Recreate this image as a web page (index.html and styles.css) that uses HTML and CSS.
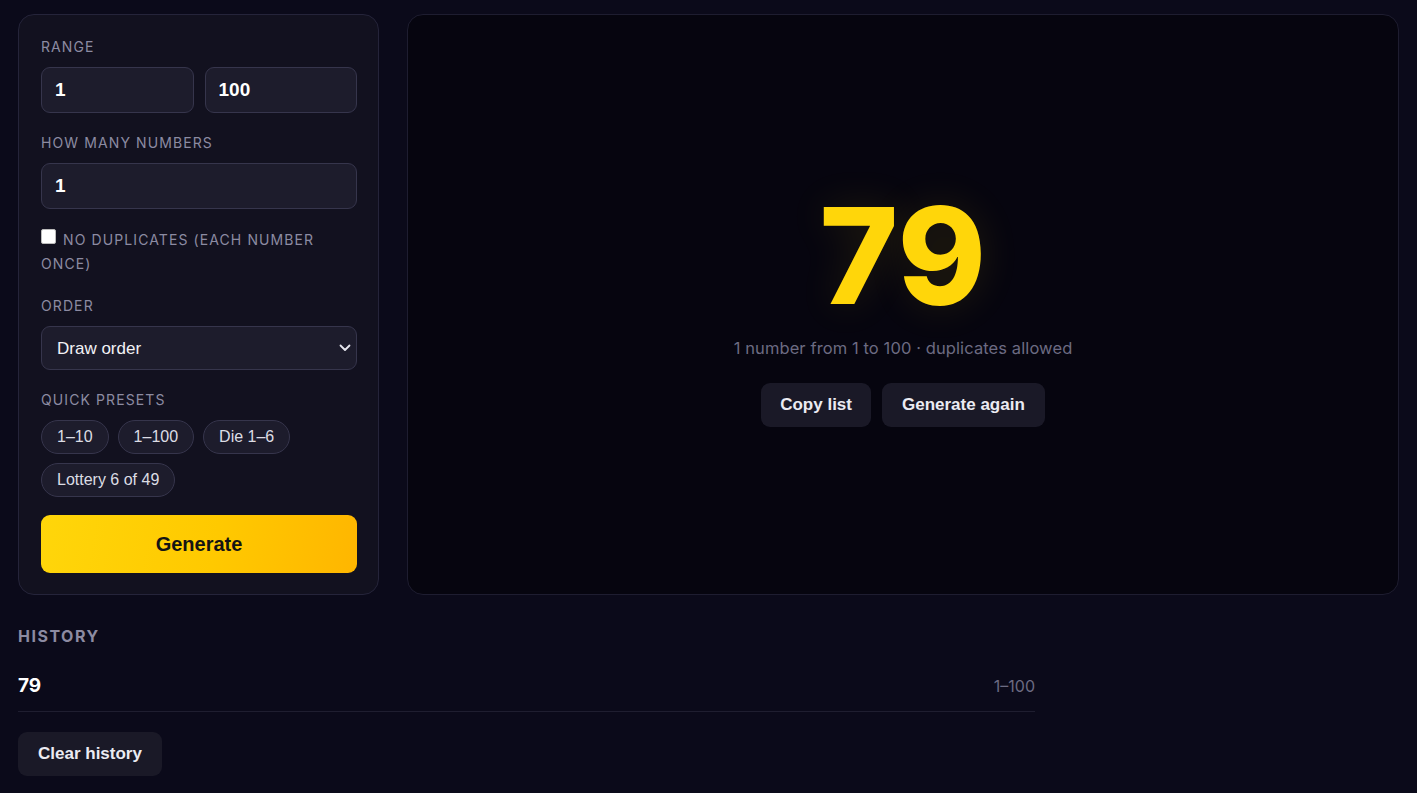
FILE: index.html
```html
<!DOCTYPE html>
<html lang="en">
<head>
<meta charset="utf-8">
<title>Random Number Generator</title>
<link rel="stylesheet" href="styles.css">
</head>
<body>
<div class="page">
  <div class="main">
    <section class="controls">
      <div class="field">
        <div class="label">Range</div>
        <div class="range-row">
          <input class="input" type="text" value="1">
          <input class="input" type="text" value="100">
        </div>
      </div>
      <div class="field">
        <div class="label">How many numbers</div>
        <input class="input" type="text" value="1">
      </div>
      <label class="check label"><input type="checkbox" class="cb">No duplicates (each number once)</label>
      <div class="field">
        <div class="label">Order</div>
        <div class="select-wrap">
          <select class="select"><option>Draw order</option></select>
          <svg class="chev" width="12" height="8" viewBox="0 0 12 8"><path d="M1.5 1.5 L6 6 L10.5 1.5" fill="none" stroke="#e6e6ee" stroke-width="1.8" stroke-linecap="round" stroke-linejoin="round"/></svg>
        </div>
      </div>
      <div class="field">
        <div class="label">Quick presets</div>
        <div class="chips">
          <button class="chip">1–10</button>
          <button class="chip">1–100</button>
          <button class="chip">Die 1–6</button>
          <button class="chip">Lottery 6 of 49</button>
        </div>
      </div>
      <button class="generate">Generate</button>
    </section>
    <section class="result">
      <div class="big">79</div>
      <div class="sub">1 number from 1 to 100 · duplicates allowed</div>
      <div class="actions">
        <button class="btn">Copy list</button>
        <button class="btn">Generate again</button>
      </div>
    </section>
  </div>
  <section class="history">
    <div class="h-title">History</div>
    <div class="h-row"><span class="h-num">79</span><span class="h-range">1–100</span></div>
    <button class="btn clear">Clear history</button>
  </section>
</div>
</body>
</html>
```

FILE: styles.css
```css
* { box-sizing: border-box; }
html, body { margin: 0; padding: 0; }
body {
  background: #0b0a1a;
  color: #ececf2;
  font-family: Inter, "Noto Sans", sans-serif;
}
.page { padding: 14px 18px 0 18px; }
.main {
  display: grid;
  grid-template-columns: 361px 1fr;
  gap: 28px;
}
.controls {
  background: #12111f;
  border: 1px solid #25243a;
  border-radius: 16px;
  padding: 22px 21px 21px 22px;
  display: flex;
  flex-direction: column;
  gap: 20px;
}
.field { display: flex; flex-direction: column; gap: 10px; }
.label {
  font-size: 14px;
  line-height: 20px;
  letter-spacing: 1.1px;
  text-transform: uppercase;
  color: #8c8ba2;
}
.range-row { display: grid; grid-template-columns: 1fr 1fr; gap: 11px; }
.input {
  height: 46px;
  width: 100%;
  background: #1d1c2c;
  border: 1px solid #36354c;
  border-radius: 9px;
  color: #fff;
  font-family: "Liberation Sans", Arial, sans-serif;
  font-weight: bold;
  font-size: 19px;
  padding: 0 13px;
  outline: none;
}
.check {
  display: block;
  line-height: 24px;
  margin-top: -1px;
}
.cb {
  width: 15px; height: 15px;
  margin: 0 7px 0 0;
  vertical-align: 1px;
  appearance: none;
  background: #fff;
  border-radius: 2px;
  border: 1px solid #bbb;
}
.select-wrap { position: relative; }
.select {
  appearance: none;
  width: 100%;
  height: 44px;
  background: #1d1c2c;
  border: 1px solid #36354c;
  border-radius: 9px;
  color: #f2f2f6;
  font-family: "Liberation Sans", Arial, sans-serif;
  font-size: 17px;
  padding: 0 15px;
}
.chev { position: absolute; right: 6px; top: 18px; }
.chips { display: flex; flex-wrap: wrap; gap: 9px; }
.chip {
  height: 34px;
  padding: 0 15px;
  background: #1d1c2c;
  border: 1px solid #36354c;
  border-radius: 18px;
  color: #dcdce4;
  font-family: "Liberation Sans", Arial, sans-serif;
  font-size: 16px;
}
.generate {
  margin-top: -2px;
  height: 58px;
  border: none;
  border-radius: 9px;
  background: linear-gradient(100deg, #ffd60a 0%, #ffc900 55%, #ffb600 100%);
  color: #141414;
  font-family: "Liberation Sans", Arial, sans-serif;
  font-weight: bold;
  font-size: 20px;
}
.result {
  background: #06050f;
  border: 1px solid #1e1d30;
  border-radius: 16px;
  display: flex;
  flex-direction: column;
  align-items: center;
  justify-content: center;
  padding-top: 6px;
}
.big {
  font-size: 134px;
  font-weight: 800;
  line-height: 1;
  color: #ffd60a;
  letter-spacing: 0.5px;
  text-shadow: 0 0 40px rgba(255, 214, 10, 0.12);
}
.sub {
  margin-top: 16px;
  font-size: 16.5px;
  letter-spacing: 0.1px;
  color: #6c6b82;
}
.actions { display: flex; gap: 11px; margin-top: 25px; }
.btn {
  height: 44px;
  padding: 0 19px;
  background: #1a1927;
  border: none;
  border-radius: 9px;
  color: #ebebf2;
  font-family: "Liberation Sans", Arial, sans-serif;
  font-weight: bold;
  font-size: 17px;
}
.actions .btn:last-child { padding: 0 20px; }
.history { max-width: 1017px; padding-top: 30px; }
.h-title {
  font-size: 16px;
  font-weight: 700;
  line-height: 22px;
  letter-spacing: 1.5px;
  text-transform: uppercase;
  color: #8c8ba2;
}
.h-row {
  display: flex;
  justify-content: space-between;
  align-items: center;
  padding: 15px 0 14px;
  margin-top: 13px;
  border-bottom: 1px solid #1f1e30;
}
.h-num { font-size: 19px; font-weight: 700; color: #fff; line-height: 22px; }
.h-range { font-size: 16px; color: #6c6b82; }
.clear { margin-top: 20px; padding: 0 20px; }
```
